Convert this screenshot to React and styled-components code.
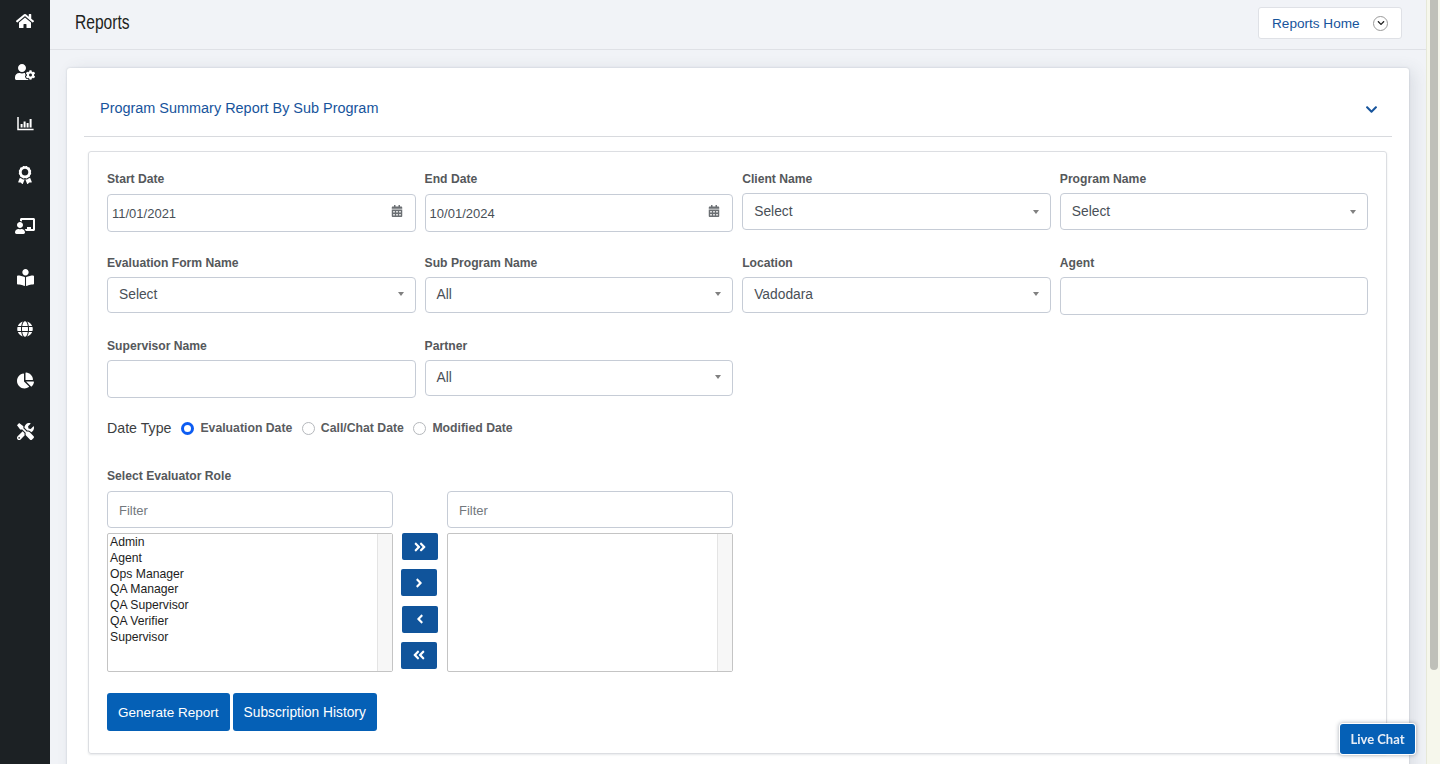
import React from 'react';
import styled, { createGlobalStyle } from 'styled-components';
import {
  FaHome, FaUserCog, FaAward, FaChalkboardTeacher, FaBookReader, FaGlobe,
  FaChartPie, FaTools, FaCalendarAlt, FaChevronDown, FaAngleDoubleRight,
  FaAngleRight, FaAngleLeft, FaAngleDoubleLeft,
} from 'react-icons/fa';

const GlobalStyle = createGlobalStyle`
  html, body { margin: 0; padding: 0; height: 100%; overflow: hidden; }
  body { font-family: "Liberation Sans", Arial, sans-serif; background: #f1f3f7; }
  * { box-sizing: border-box; }
`;

function ChartIcon() {
  return (
    <svg width="17" height="15" viewBox="0 0 17 15" fill="none">
      <path d="M1 1v12.6h15.6" stroke="#fff" strokeWidth="1.5" />
      <path d="M4.6 11.5V8M7.6 11.5V5.5M10.6 11.5V7M13.6 11.5V3" stroke="#fff" strokeWidth="2" />
    </svg>
  );
}

export default function App() {
  return (
    <Page>
      <GlobalStyle />
      <Sidebar>
        <NavIcon><FaHome size={18} /></NavIcon>
        <NavIcon><FaUserCog size={20} /></NavIcon>
        <NavIcon><ChartIcon /></NavIcon>
        <NavIcon><FaAward size={18} /></NavIcon>
        <NavIcon><FaChalkboardTeacher size={20} /></NavIcon>
        <NavIcon><FaBookReader size={17} /></NavIcon>
        <NavIcon><FaGlobe size={16} /></NavIcon>
        <NavIcon><FaChartPie size={17} /></NavIcon>
        <NavIcon><FaTools size={17} /></NavIcon>
      </Sidebar>

      <Main>
        <Header>
          <Title>Reports</Title>
          <HomeButton>
            Reports Home
            <CircleIcon><FaChevronDown size={8} /></CircleIcon>
          </HomeButton>
        </Header>

        <Content>
          <Card>
            <AccordionHead>
              <AccordionTitle>Program Summary Report By Sub Program</AccordionTitle>
              <FaChevronDown size={13} color="#17549c" />
            </AccordionHead>

            <FormCard>
              <FormGrid>
                <Field>
                  <Label>Start Date</Label>
                  <DateBox>11/01/2021<FaCalendarAlt size={12} color="#6b6f73" /></DateBox>
                </Field>
                <Field>
                  <Label>End Date</Label>
                  <DateBox>10/01/2024<FaCalendarAlt size={12} color="#6b6f73" /></DateBox>
                </Field>
                <Field>
                  <Label>Client Name</Label>
                  <SelectBox>Select<Caret /></SelectBox>
                </Field>
                <Field>
                  <Label>Program Name</Label>
                  <SelectBox>Select<Caret /></SelectBox>
                </Field>

                <Field>
                  <Label>Evaluation Form Name</Label>
                  <SelectBox $short>Select<Caret /></SelectBox>
                </Field>
                <Field>
                  <Label>Sub Program Name</Label>
                  <SelectBox $short>All<Caret /></SelectBox>
                </Field>
                <Field>
                  <Label>Location</Label>
                  <SelectBox $short>Vadodara<Caret /></SelectBox>
                </Field>
                <Field>
                  <Label>Agent</Label>
                  <TextBox />
                </Field>

                <Field>
                  <Label>Supervisor Name</Label>
                  <TextBox />
                </Field>
                <Field>
                  <Label>Partner</Label>
                  <SelectBox $short>All<Caret /></SelectBox>
                </Field>
              </FormGrid>

              <DateTypeRow>
                <DateTypeLabel>Date Type</DateTypeLabel>
                <Radio $checked />
                <RadioText>Evaluation Date</RadioText>
                <Radio />
                <RadioText>Call/Chat Date</RadioText>
                <Radio />
                <RadioText>Modified Date</RadioText>
              </DateTypeRow>

              <RoleLabel>Select Evaluator Role</RoleLabel>
              <DualList>
                <FilterBox>Filter</FilterBox>
                <span />
                <FilterBox>Filter</FilterBox>

                <ListBox>
                  <ListItems>
                    {['Admin', 'Agent', 'Ops Manager', 'QA Manager', 'QA Supervisor', 'QA Verifier', 'Supervisor'].map((role) => (
                      <ListItem key={role}>{role}</ListItem>
                    ))}
                  </ListItems>
                  <ListTrack />
                </ListBox>
                <MoveButtons>
                  <MoveButton $shift={9}><FaAngleDoubleRight size={14} /></MoveButton>
                  <MoveButton $shift={8}><FaAngleRight size={14} /></MoveButton>
                  <MoveButton $shift={9}><FaAngleLeft size={14} /></MoveButton>
                  <MoveButton $shift={8}><FaAngleDoubleLeft size={14} /></MoveButton>
                </MoveButtons>
                <ListBox>
                  <ListItems />
                  <ListTrack />
                </ListBox>
              </DualList>

              <Actions>
                <PrimaryButton $size={13.5}>Generate Report</PrimaryButton>
                <PrimaryButton $size={13.75}>Subscription History</PrimaryButton>
              </Actions>
            </FormCard>
          </Card>
        </Content>
      </Main>

      <ScrollTrack><ScrollThumb /></ScrollTrack>
      <LiveChat>Live Chat</LiveChat>
    </Page>
  );
}

const Page = styled.div`
  display: flex;
  width: 1440px;
  height: 764px;
  overflow: hidden;
`;

const Sidebar = styled.nav`
  width: 50px;
  flex-shrink: 0;
  background: #1c2124;
  display: flex;
  flex-direction: column;
  align-items: center;
  padding-top: 11px;
  gap: 31.35px;
`;

const NavIcon = styled.div`
  height: 20px;
  display: flex;
  align-items: center;
  justify-content: center;
  color: #fff;
`;

const Main = styled.div`
  flex: 1;
  min-width: 0;
  display: flex;
  flex-direction: column;
  background: #f1f3f7;
`;

const Header = styled.header`
  height: 50px;
  flex-shrink: 0;
  display: flex;
  align-items: flex-start;
  justify-content: space-between;
  padding: 7px 24px 0 25px;
  border-bottom: 1px solid #dfe1e6;
`;

const Title = styled.h1`
  margin: 0;
  font-size: 20px;
  font-weight: 400;
  line-height: 31px;
  color: #1d1f21;
  transform: scaleX(0.78);
  transform-origin: left center;
`;

const HomeButton = styled.button`
  width: 144px;
  height: 32px;
  display: flex;
  align-items: center;
  justify-content: space-between;
  padding: 0 13px;
  background: #fff;
  border: 1px solid #dfe1e6;
  border-radius: 3px;
  font-family: inherit;
  font-size: 13.6px;
  color: #17549c;
`;

const CircleIcon = styled.span`
  width: 15px;
  height: 15px;
  display: flex;
  align-items: center;
  justify-content: center;
  border: 1px solid #9a9a9a;
  border-radius: 50%;
  color: #222;
`;

const Content = styled.main`
  flex: 1;
  min-height: 0;
  padding: 18px 17px 0;
`;

const Card = styled.section`
  height: 760px;
  padding: 0 17px;
  background: #fff;
  border-radius: 3px;
  box-shadow: 0 0 2px rgba(60, 70, 90, 0.25), 5px 2px 16px rgba(60, 70, 90, 0.12);
`;

const AccordionHead = styled.div`
  height: 69px;
  display: flex;
  align-items: flex-start;
  justify-content: space-between;
  padding: 30px 14px 0 16px;
  border-bottom: 1px solid #d8dade;

  svg { margin-top: 5px; }
`;

const AccordionTitle = styled.h2`
  margin: 0;
  font-size: 14.45px;
  font-weight: 400;
  line-height: 20px;
  color: #17549c;
`;

const FormCard = styled.div`
  margin: 14px 5px 0 4px;
  padding: 19px 19px 22px 18px;
  border: 1px solid #dcdee2;
  border-radius: 3px;
  box-shadow: 0 1px 2px rgba(60, 70, 90, 0.12);
`;

const FormGrid = styled.div`
  display: grid;
  grid-template-columns: repeat(4, 308.6px);
  column-gap: 9px;
  row-gap: 23px;
  align-items: start;
`;

const Field = styled.div`
  display: flex;
  flex-direction: column;
`;

const Label = styled.label`
  height: 16px;
  margin-bottom: 6px;
  font-size: 12.15px;
  font-weight: 700;
  line-height: 16px;
  color: #55585b;
`;

const DateBox = styled.div`
  height: 38px;
  margin-top: 1px;
  display: flex;
  align-items: center;
  justify-content: space-between;
  padding: 0 12px 0 4px;
  border: 1px solid #c6ccd6;
  border-radius: 4px;
  font-size: 13px;
  color: #495057;

  svg { margin-top: -4px; }
`;

const SelectBox = styled.div`
  height: ${(p) => (p.$short ? '36px' : '37px')};
  display: flex;
  align-items: center;
  justify-content: space-between;
  padding: 0 11px ${(p) => (p.$short ? '2px' : '0')} 11px;
  border: 1px solid #c6ccd6;
  border-radius: 4px;
  font-size: 13.8px;
  color: #495057;
`;

const Caret = styled.span`
  width: 0;
  height: 0;
  border-left: 3px solid transparent;
  border-right: 3px solid transparent;
  border-top: 4px solid #808080;
`;

const TextBox = styled.div`
  height: 38px;
  border: 1px solid #c6ccd6;
  border-radius: 4px;
`;

const DateTypeRow = styled.div`
  height: 20px;
  margin-top: 20px;
  display: flex;
  align-items: center;
`;

const DateTypeLabel = styled.span`
  margin-right: 10px;
  font-size: 14.2px;
  color: #3c3e41;
`;

const Radio = styled.span`
  width: 13px;
  height: 13px;
  margin-right: 6px;
  border-radius: 50%;
  background: #fff;
  border: ${(p) => (p.$checked ? '3.5px solid #0d5cf2' : '1px solid #b5b8bc')};
`;

const RadioText = styled.span`
  margin-right: 9.5px;
  font-size: 12.25px;
  font-weight: 700;
  color: #5a5c5f;
`;

const RoleLabel = styled.div`
  height: 16px;
  margin-top: 30px;
  margin-bottom: 7px;
  font-size: 12.15px;
  font-weight: 700;
  line-height: 16px;
  color: #55585b;
`;

const DualList = styled.div`
  display: grid;
  grid-template-columns: 286px 54px 286px;
  grid-template-rows: 37px 139px;
  row-gap: 5px;
`;

const FilterBox = styled.div`
  display: flex;
  align-items: center;
  padding: 1px 0 0 11px;
  border: 1px solid #c6ccd6;
  border-radius: 4px;
  font-size: 13px;
  color: #73787e;
`;

const ListBox = styled.div`
  display: flex;
  border: 1px solid #c4c4c4;
  border-radius: 2px;
`;

const ListItems = styled.ul`
  flex: 1;
  margin: 0;
  padding: 1px 0 0 2px;
  list-style: none;
`;

const ListItem = styled.li`
  font-size: 12.2px;
  line-height: 15.8px;
  color: #1d1d1d;
`;

const ListTrack = styled.div`
  width: 15px;
  background: #f7f7f7;
  border-left: 1px solid #e4e4e4;
`;

const MoveButtons = styled.div`
  height: 136px;
  display: flex;
  flex-direction: column;
  justify-content: space-between;
`;

const MoveButton = styled.button`
  width: 36px;
  height: 27px;
  margin-left: ${(p) => p.$shift}px;
  padding: 0;
  display: flex;
  align-items: center;
  justify-content: center;
  background: #10549b;
  border: none;
  border-radius: 2px;
  color: #fff;
`;

const Actions = styled.div`
  margin-top: 21px;
  display: flex;
  gap: 3px;
`;

const PrimaryButton = styled.button`
  height: 38px;
  padding: 0 11px;
  background: #0560b6;
  border: none;
  border-radius: 3px;
  font-family: inherit;
  font-size: ${(p) => p.$size}px;
  color: #fff;
`;

const ScrollTrack = styled.div`
  width: 14px;
  flex-shrink: 0;
  padding: 0 3px;
  background: #f6f7ec;
  border-left: 1px solid #e6e8d8;
`;

const ScrollThumb = styled.div`
  width: 8px;
  height: 670px;
  background: #bfc0b9;
  border-radius: 0 0 4px 4px;
`;

const LiveChat = styled.button`
  position: fixed;
  left: 1340px;
  top: 724px;
  width: 75px;
  height: 30px;
  padding: 0;
  background: #0560b6;
  border: none;
  border-radius: 3px;
  box-shadow: 0 0 0 1px #fff, 0 0 4px 1px rgba(60, 70, 90, 0.45);
  font-family: Lato, sans-serif;
  font-size: 13px;
  font-weight: 700;
  color: #e8eef6;
`;
